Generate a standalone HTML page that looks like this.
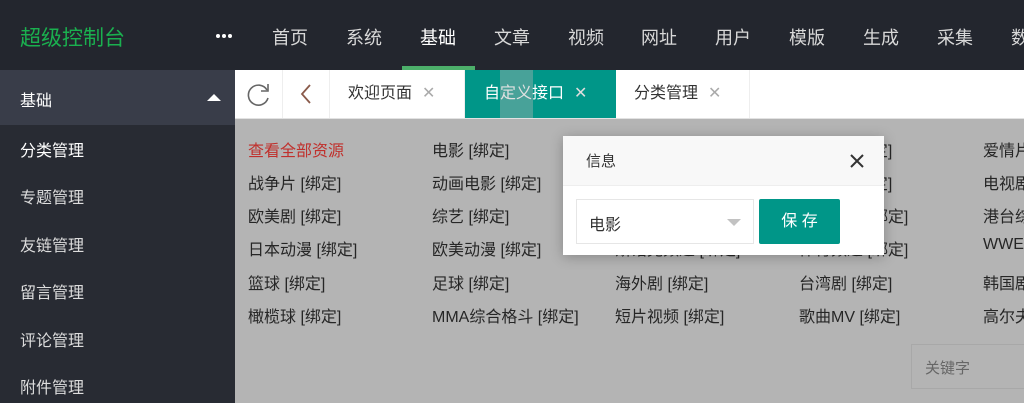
<!DOCTYPE html>
<html><head><meta charset="utf-8"><style>
*{margin:0;padding:0;box-sizing:border-box}
body{width:1024px;height:403px;overflow:hidden;position:relative;background:#b4b4b4;font-family:"Liberation Sans","Noto Sans CJK SC",sans-serif}
.hdr{position:absolute;left:0;top:0;width:1024px;height:70px;background:#23262e}
.logo{position:absolute;left:20px;top:22px;font-size:21px;color:#1ab04f}
.dots{position:absolute;left:216px;top:34px;width:16px;height:4px}
.dots i{position:absolute;top:0;width:4px;height:4px;border-radius:2px;background:#fff}
.nav{position:absolute;top:24px;font-size:18px;color:#d8d8d8;transform:translateX(-50%);white-space:nowrap}
.nav.a{color:#fff}
.ul{position:absolute;left:402px;top:66px;width:73px;height:4px;background:#4caf6a}
.side{position:absolute;left:0;top:70px;width:235px;height:333px;background:#282b33}
.sh{height:55px;background:#393d49;color:#fff;font-size:16px;padding:17px 20px;position:relative}
.sh:after{content:"";position:absolute;right:14px;top:24px;border:7px solid transparent;border-bottom-color:#fff;border-top:0;border-width:0 7px 7px}
.si{position:absolute;left:20px;font-size:16px;color:#ddd}
.tabs{position:absolute;left:235px;top:70px;width:789px;height:49px;background:#fff;border-bottom:1px solid #e2e2e2}
.tb{position:absolute;top:0;height:48px;border-right:1px solid #eee;font-size:16px;color:#333;line-height:48px}
.x{color:#aaa;font-size:16px;margin-left:10px}
.c{position:absolute;font-size:16px;color:#262626;white-space:nowrap}
.dlg{position:absolute;left:563px;top:136px;width:321px;height:119px;background:#fff;box-shadow:0 2px 12px rgba(0,0,0,.25)}
.dh{height:50px;background:#f8f8f8;border-bottom:1px solid #eee;font-size:15px;color:#333;padding:14px 23px;position:relative}
</style></head><body>
<div class="hdr">
<div class="logo">超级控制台</div>
<div class="dots"><i style="left:0"></i><i style="left:6px"></i><i style="left:12px"></i></div>
<div class="nav" style="left:290px">首页</div>
<div class="nav" style="left:364px">系统</div>
<div class="nav a" style="left:438px">基础</div>
<div class="nav" style="left:512px">文章</div>
<div class="nav" style="left:586px">视频</div>
<div class="nav" style="left:659px">网址</div>
<div class="nav" style="left:733px">用户</div>
<div class="nav" style="left:807px">模版</div>
<div class="nav" style="left:881px">生成</div>
<div class="nav" style="left:955px">采集</div>
<div class="nav" style="left:1029px">数据</div>
<div class="ul"></div>
</div>
<div class="side">
<div class="sh">基础</div>
<div class="si" style="top:67px;color:#fff">分类管理</div>
<div class="si" style="top:114px">专题管理</div>
<div class="si" style="top:162px">友链管理</div>
<div class="si" style="top:209px">留言管理</div>
<div class="si" style="top:257px">评论管理</div>
<div class="si" style="top:304px">附件管理</div>
</div>
<div class="tabs">
<div class="tb" style="left:0;width:48px"><svg width="48" height="48"><path d="M32 20A10 10 0 1 0 33 28" fill="none" stroke="#666" stroke-width="1.6"/><path d="M33 14v7h-7" fill="none" stroke="#666" stroke-width="1.6"/></svg></div>
<div class="tb" style="left:48px;width:47px"><svg width="47" height="48"><path d="M27 15l-8 9 8 9" fill="none" stroke="#8a5a4a" stroke-width="1.8"/></svg></div>
<div class="tb" style="left:95px;width:135px;padding-left:18px">欢迎页面<span class="x">✕</span></div>
<div class="tb" style="left:230px;width:151px;background:#009688;color:#fff;padding-left:19px;border:0">自定义接口<span class="x" style="color:#ddd">✕</span><div style="position:absolute;left:35px;top:0;width:33px;height:48px;background:rgba(180,180,180,.4)"></div></div>
<div class="tb" style="left:381px;width:134px;padding-left:18px">分类管理<span class="x">✕</span></div>
</div>
<div class="c" style="left:248px;top:137px;color:#c0302c">查看全部资源</div>
<div class="c" style="left:248px;top:170px">战争片 [绑定]</div>
<div class="c" style="left:248px;top:203px">欧美剧 [绑定]</div>
<div class="c" style="left:248px;top:236px">日本动漫 [绑定]</div>
<div class="c" style="left:248px;top:270px">篮球 [绑定]</div>
<div class="c" style="left:248px;top:303px">橄榄球 [绑定]</div>
<div class="c" style="left:432px;top:137px">电影 [绑定]</div>
<div class="c" style="left:432px;top:170px">动画电影 [绑定]</div>
<div class="c" style="left:432px;top:203px">综艺 [绑定]</div>
<div class="c" style="left:432px;top:236px">欧美动漫 [绑定]</div>
<div class="c" style="left:432px;top:270px">足球 [绑定]</div>
<div class="c" style="left:432px;top:303px">MMA综合格斗 [绑定]</div>
<div class="c" style="left:615px;top:236px">斯诺克频道 [绑定]</div>
<div class="c" style="left:615px;top:270px">海外剧 [绑定]</div>
<div class="c" style="left:615px;top:303px">短片视频 [绑定]</div>
<div class="c" style="left:799px;top:137px">喜剧片 [绑定]</div>
<div class="c" style="left:799px;top:170px">纪录片 [绑定]</div>
<div class="c" style="left:799px;top:203px">国产动漫 [绑定]</div>
<div class="c" style="left:799px;top:236px">体育频道 [绑定]</div>
<div class="c" style="left:799px;top:270px">台湾剧 [绑定]</div>
<div class="c" style="left:799px;top:303px">歌曲MV [绑定]</div>
<div class="c" style="left:983px;top:137px">爱情片</div>
<div class="c" style="left:983px;top:170px">电视剧</div>
<div class="c" style="left:983px;top:203px">港台综艺</div>
<div class="c" style="left:983px;top:236px">WWE</div>
<div class="c" style="left:983px;top:270px">韩国剧</div>
<div class="c" style="left:983px;top:303px">高尔夫</div>
<div style="position:absolute;left:911px;top:344px;width:120px;height:45px;border:1px solid #a8a8a8;background:#b4b4b4;font-size:15px;color:#666;padding:12px 13px">关键字</div>
<div class="dlg">
<div class="dh">信息<svg style="position:absolute;right:20px;top:18px" width="14" height="14"><path d="M1 1L13 13M13 1L1 13" stroke="#333" stroke-width="2"/></svg></div>
<div style="position:absolute;left:13px;top:63px;width:178px;height:45px;border:1px solid #e6e6e6;font-size:16px;color:#333;padding:11px 12px">电影<span style="position:absolute;right:12px;top:19px;border:7px solid transparent;border-top-color:#c2c2c2;border-bottom:0"></span></div>
<div style="position:absolute;left:196px;top:63px;width:81px;height:45px;background:#009688;color:#fff;font-size:16px;text-align:center;line-height:45px;border-radius:2px">保 存</div>
</div>
</body></html>
